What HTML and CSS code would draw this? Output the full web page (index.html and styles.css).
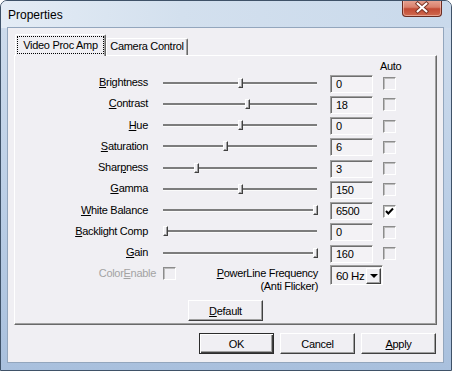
FILE: index.html
```html
<!DOCTYPE html>
<html>
<head>
    <link rel="stylesheet" href="styles.css">
</head>
<body>

<div class="window">
    <div class="titlebar">
        <span class="title">Properties</span>
        <div class="close">
            <svg width="40" height="17" viewBox="0 0 40 17">
                <path d="M15.5 4.5 L24.5 12.5 M24.5 4.5 L15.5 12.5" stroke="#7a3325" stroke-width="4.2" stroke-linecap="square"/>
                <path d="M15.5 4.5 L24.5 12.5 M24.5 4.5 L15.5 12.5" stroke="#fff" stroke-width="2.2" stroke-linecap="square"/>
            </svg>
        </div>
    </div>

    <div class="client">
        <div class="tabs">
            <div class="tab active"><span class="focus">Video Proc Amp</span></div>
            <div class="tab second">Camera Control</div>
        </div>

        <div class="panel">
            <div class="grid">
                <div></div><div></div><div></div>
                <div class="auto">Auto</div>

                <div class="lbl"><u>B</u>rightness</div>
                <div class="slider"><div class="thumb" style="left: 75px"></div></div>
                <div class="edit">0</div>
                <div class="chk"></div>

                <div class="lbl"><u>C</u>ontrast</div>
                <div class="slider"><div class="thumb" style="left: 82px"></div></div>
                <div class="edit">18</div>
                <div class="chk"></div>

                <div class="lbl"><u>H</u>ue</div>
                <div class="slider"><div class="thumb" style="left: 75px"></div></div>
                <div class="edit">0</div>
                <div class="chk"></div>

                <div class="lbl"><u>S</u>aturation</div>
                <div class="slider"><div class="thumb" style="left: 60px"></div></div>
                <div class="edit">6</div>
                <div class="chk"></div>

                <div class="lbl">Shar<u>p</u>ness</div>
                <div class="slider"><div class="thumb" style="left: 31px"></div></div>
                <div class="edit">3</div>
                <div class="chk"></div>

                <div class="lbl"><u>G</u>amma</div>
                <div class="slider"><div class="thumb" style="left: 75px"></div></div>
                <div class="edit">150</div>
                <div class="chk"></div>

                <div class="lbl"><u>W</u>hite Balance</div>
                <div class="slider"><div class="thumb" style="left: 150px"></div></div>
                <div class="edit">6500</div>
                <div class="chk checked">
                    <svg width="11" height="11" viewBox="0 0 11 11">
                        <path d="M2 5 L4.3 7.5 L9 2.5" fill="none" stroke="#000" stroke-width="2"/>
                    </svg>
                </div>

                <div class="lbl"><u>B</u>acklight Comp</div>
                <div class="slider"><div class="thumb" style="left: 0px"></div></div>
                <div class="edit">0</div>
                <div class="chk"></div>

                <div class="lbl"><u>G</u>ain</div>
                <div class="slider"><div class="thumb" style="left: 150px"></div></div>
                <div class="edit">160</div>
                <div class="chk"></div>
            </div>

            <div class="extra">
                <div class="color-enable">
                    <span>Color<u>E</u>nable</span>
                    <div class="chk"></div>
                </div>
                <div class="powerline"><u>P</u>owerLine Frequency<br>(Anti Flicker)</div>
                <div class="combo">
                    <span>60 Hz</span>
                    <div class="drop"><div class="arrow"></div></div>
                </div>
            </div>

            <div class="default-row">
                <button class="btn"><u>D</u>efault</button>
            </div>
        </div>

        <div class="buttons">
            <button class="btn primary">OK</button>
            <button class="btn">Cancel</button>
            <button class="btn"><u>A</u>pply</button>
        </div>
    </div>
</div>

</body>
</html>
```

FILE: styles.css
```css
body {
    margin: 0;
    font-family: "Liberation Sans", Arial, sans-serif;
    font-size: 11px;
    letter-spacing: -0.3px;
    color: #000;
}

.window {
    width: 452px;
    height: 371px;
    box-sizing: border-box;
    border: 1px solid #3f5268;
    border-radius: 7px 7px 0 0;
    background: linear-gradient(180deg, #dfe8f3 0%, #cddbec 8%, #bdd0e7 50%, #a9c0dd 100%);
    display: flex;
    flex-direction: column;
    overflow: hidden;
}

.titlebar {
    height: 27px;
    display: flex;
    align-items: center;
    padding-left: 7px;
    background: linear-gradient(90deg, #e4ecf5 0%, #d3e0ee 40%, #c9d9eb 100%);
}

.title {
    font-size: 12px;
    letter-spacing: 0;
    margin-top: 1px;
}

.close {
    margin-left: auto;
    margin-right: 9px;
    margin-top: -1px;
    align-self: flex-start;
    width: 40px;
    height: 17px;
    box-sizing: border-box;
    border: 1px solid #6a2b20;
    border-top: none;
    border-radius: 0 0 4px 4px;
    background: linear-gradient(180deg, #e8a595 0%, #d9806c 45%, #c24a34 55%, #cf6a4f 100%);
    box-shadow: inset 0 0 0 1px rgba(255, 220, 210, 0.5);
    display: flex;
    align-items: center;
    justify-content: center;
}

.close svg {
    margin-top: -1px;
}

.client {
    margin: 0 8px 8px 7px;
    height: 334px;
    box-sizing: border-box;
    padding: 6px 6px 0 6px;
    background: #f0eff3;
    box-shadow: 0 0 0 1px #93a6bd;
}

/* tabs */

.tabs {
    display: flex;
    align-items: flex-end;
    height: 21px;
    position: relative;
    z-index: 1;
    padding-left: 1px;
}

.tab {
    box-sizing: border-box;
    height: 17px;
    width: 82px;
    border: 1px solid #fff;
    border-right-color: #696969;
    border-bottom: none;
    border-radius: 2px 2px 0 0;
    box-shadow: inset -1px 0 #a0a0a0;
    text-align: center;
    line-height: 15px;
    background: #f0eff3;
}

.tab.active {
    height: 22px;
    width: 91px;
    margin-bottom: -1px;
    padding-top: 2px;
}

.focus {
    display: inline-block;
    outline: 1px dotted #000;
    padding: 0 5px;
    line-height: 16px;
}

.panel {
    height: 270px;
    box-sizing: border-box;
    border: 1px solid;
    border-color: #fff #696969 #696969 #fff;
    box-shadow: inset -1px -1px #a0a0a0;
}

/* slider rows */

.grid {
    margin-top: 2px;
    display: grid;
    grid-template-columns: 133px 170px 55px 23px;
    grid-template-rows: 15px repeat(9, 21.25px);
}

.auto {
    padding-left: 7px;
    white-space: nowrap;
    align-self: center;
}

.lbl {
    text-align: right;
    align-self: center;
    padding-bottom: 3px;
    white-space: nowrap;
}

.slider {
    position: relative;
    align-self: center;
    margin-left: 15px;
    width: 154px;
    height: 2px;
    background: #7c7c7c;
    border-bottom: 1px solid #fafafa;
    margin-top: -1px;
}

.thumb {
    position: absolute;
    top: -4px;
    width: 5px;
    height: 10px;
    box-sizing: border-box;
    background: #f0eff3;
    border-left: 1px solid #fff;
    border-top: 1px solid #fff;
    border-right: 1px solid #404040;
    border-bottom: 1px solid #404040;
    box-shadow: inset -1px -1px #a0a0a0;
}

.edit {
    justify-self: end;
    align-self: center;
    width: 43px;
    height: 18px;
    box-sizing: border-box;
    border: 1px solid;
    border-color: #a0a0a0 #fff #fff #a0a0a0;
    box-shadow: inset 1px 1px #6e6e6e;
    background: #f3f2f5;
    padding-left: 5px;
    line-height: 17px;
}

.chk {
    justify-self: end;
    align-self: center;
    width: 13px;
    height: 13px;
    box-sizing: border-box;
    border: 1px solid;
    border-color: #8c8c8c #fff #fff #8c8c8c;
    box-shadow: inset 1px 1px #bcbcbc;
}

.chk.checked {
    background: #fff;
    display: flex;
    align-items: center;
    justify-content: center;
}

/* bottom of the tab */

.extra {
    display: flex;
    height: 29px;
}

.color-enable {
    width: 161px;
    display: flex;
    justify-content: flex-end;
    align-items: flex-start;
    gap: 7px;
    padding-top: 3px;
    color: #a3a3a3;
}

.color-enable .chk {
    align-self: flex-start;
    margin-top: 0;
}

.powerline {
    width: 142px;
    text-align: right;
    line-height: 13px;
    padding-top: 3px;
}

.combo {
    margin-left: 12px;
    margin-top: 1px;
    width: 53px;
    height: 20px;
    box-sizing: border-box;
    border: 1px solid;
    border-color: #a0a0a0 #fff #fff #a0a0a0;
    box-shadow: inset 1px 1px #6e6e6e;
    background: #f3f2f5;
    display: flex;
    align-items: center;
    justify-content: space-between;
    padding: 1px 1px 0 5px;
    font-size: 11.5px;
}

.drop {
    width: 15px;
    height: 16px;
    box-sizing: border-box;
    border: 1px solid;
    border-color: #fff #404040 #404040 #fff;
    box-shadow: inset -1px -1px #a0a0a0;
    background: #f0eff3;
    display: flex;
    align-items: center;
    justify-content: center;
}

.arrow {
    width: 0;
    height: 0;
    border-left: 4px solid transparent;
    border-right: 4px solid transparent;
    border-top: 4px solid #000;
}

.default-row {
    margin-top: 7px;
    padding-left: 173px;
}

/* buttons */

.btn {
    width: 75px;
    height: 21px;
    box-sizing: border-box;
    font-family: "Liberation Sans", Arial, sans-serif;
    font-size: 11px;
    letter-spacing: -0.3px;
    color: #000;
    background: #f0eff3;
    border: 1px solid;
    border-color: #fff #404040 #404040 #fff;
    box-shadow: inset -1px -1px #a0a0a0;
    padding: 0;
}

.btn.primary {
    border-color: #2c2c2c;
    box-shadow: inset 1px 1px #fff, inset -1px -1px #404040, inset -2px -2px #a0a0a0;
}

.buttons {
    margin-top: 8px;
    display: flex;
    justify-content: flex-end;
    gap: 6px;
    padding-right: 1px;
}
```
